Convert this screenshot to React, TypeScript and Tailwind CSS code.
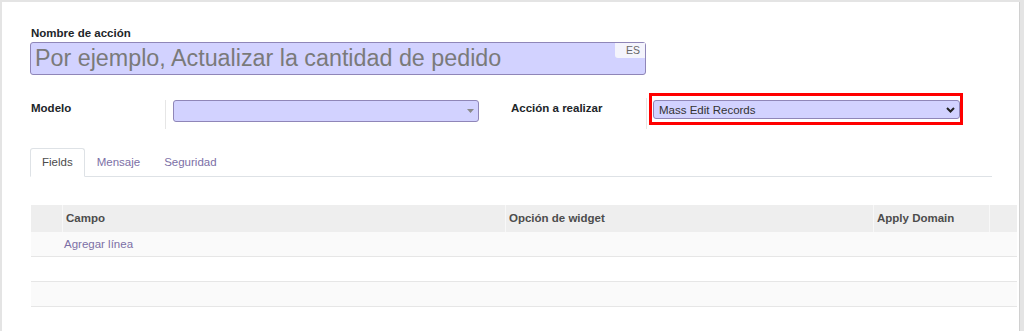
export default function App() {
  const cols = [
    { w: "w-[31px]", label: "" },
    { w: "w-[443px]", label: "Campo" },
    { w: "w-[368px]", label: "Opción de widget" },
    { w: "w-[116px]", label: "Apply Domain" },
    { w: "w-[28px]", label: "" },
  ];
  return (
    <div className="min-h-[331px] bg-[#e4e4e4] pt-[2px] pl-[2px] pr-[4px] font-['Liberation_Sans',Arial,sans-serif] text-[11.5px] leading-[16px] text-[#4c4c4c]">
      <div className="h-[329px] overflow-hidden bg-white border-r border-[#d0d0d0] pl-[28px] pt-[23px]">
        {/* Nombre de acción */}
        <div className="pl-px font-bold text-[#212529]">Nombre de acción</div>
        <div className="relative mt-px flex h-[33px] w-[616px] items-center rounded-[3px] border border-[#8f86b8] bg-[#d2d2ff] pl-[4px] pb-px">
          <span className="text-[23.3px] leading-[26px] text-[#7a7a7a]">
            Por ejemplo, Actualizar la cantidad de pedido
          </span>
          <span className="absolute right-0 top-0 h-[15px] w-[30px] rounded-bl-[3px] bg-[#f4f4fc] pl-[11px] text-[10.5px] leading-[15px] text-[#666]">
            ES
          </span>
        </div>

        {/* Modelo / Acción a realizar */}
        <div className="mt-[17px] flex items-start">
          <div className="flex w-[481px] items-start">
            <div className="w-[135px] pl-px pt-[8px] font-bold text-[#212529]">Modelo</div>
            <div className="mt-[8px] h-[29px] border-l border-[#e6e6e6] pl-[7px]">
              <div className="flex h-[22px] w-[306px] items-center justify-end rounded-[3px] border border-[#8f86b8] bg-[#d2d2ff] pr-[4px]">
                <svg width="7" height="4" viewBox="0 0 7 4">
                  <path d="M0 0 L7 0 L3.5 4 Z" fill="#8a8a8a" />
                </svg>
              </div>
            </div>
          </div>
          <div className="flex items-start">
            <div className="w-[135px] pt-[8px] font-bold text-[#212529]">Acción a realizar</div>
            <div className="mt-[6px] h-[31px] border-l border-[#e6e6e6] pl-[6px] pt-[2px]">
              <div className="relative flex h-[19px] w-[307px] items-center justify-between rounded-[3px] border border-[#8f86b8] bg-[#d2d2ff] pl-[5px] pr-[4px] text-[#333]">
                <span>Mass Edit Records</span>
                <svg width="9" height="6" viewBox="0 0 9 6">
                  <path d="M1 1 L4.5 4.5 L8 1" fill="none" stroke="#222" strokeWidth="2" />
                </svg>
                <div className="pointer-events-none absolute -left-[5px] -top-[8px] -right-[4px] -bottom-[7px] border-[3px] border-[#ff0000]" />
              </div>
            </div>
          </div>
        </div>

        {/* Tabs */}
        <div className="mt-[19px] flex w-[962px] border-b border-[#dee2e6]">
          <div className="-mb-px rounded-t-[3px] border border-[#dee2e6] border-b-white bg-white px-[11px] pb-[6px] pt-[5px] text-[#4c4c4c]">
            Fields
          </div>
          <div className="px-[12px] pb-[6px] pt-[6px] text-[#7c6fa6]">Mensaje</div>
          <div className="px-[12px] pb-[6px] pt-[6px] text-[#7c6fa6]">Seguridad</div>
        </div>

        {/* Table */}
        <div className="ml-px mt-[28px] w-[986px]">
          <div className="flex h-[27px] bg-[#eeeeee] font-bold text-[#4c4c4c]">
            {cols.map((c, i) => (
              <div
                key={i}
                className={`${c.w} flex items-center pb-px ${i > 0 ? "border-l border-[#f8f8f8] pl-[3px]" : ""}`}
              >
                {c.label}
              </div>
            ))}
          </div>
          <div className="flex h-[25px] items-center border-b border-[#e6e6e6] bg-[#fafafa]">
            <div className="w-[33px]" />
            <span className="text-[#7c6fa6]">Agregar línea</span>
          </div>
          <div className="h-[25px] border-b border-[#e6e6e6] bg-white" />
          <div className="h-[25px] border-b border-[#e6e6e6] bg-[#fafafa]" />
          <div className="h-[25px] border-b border-[#e6e6e6] bg-white" />
        </div>
      </div>
    </div>
  );
}
